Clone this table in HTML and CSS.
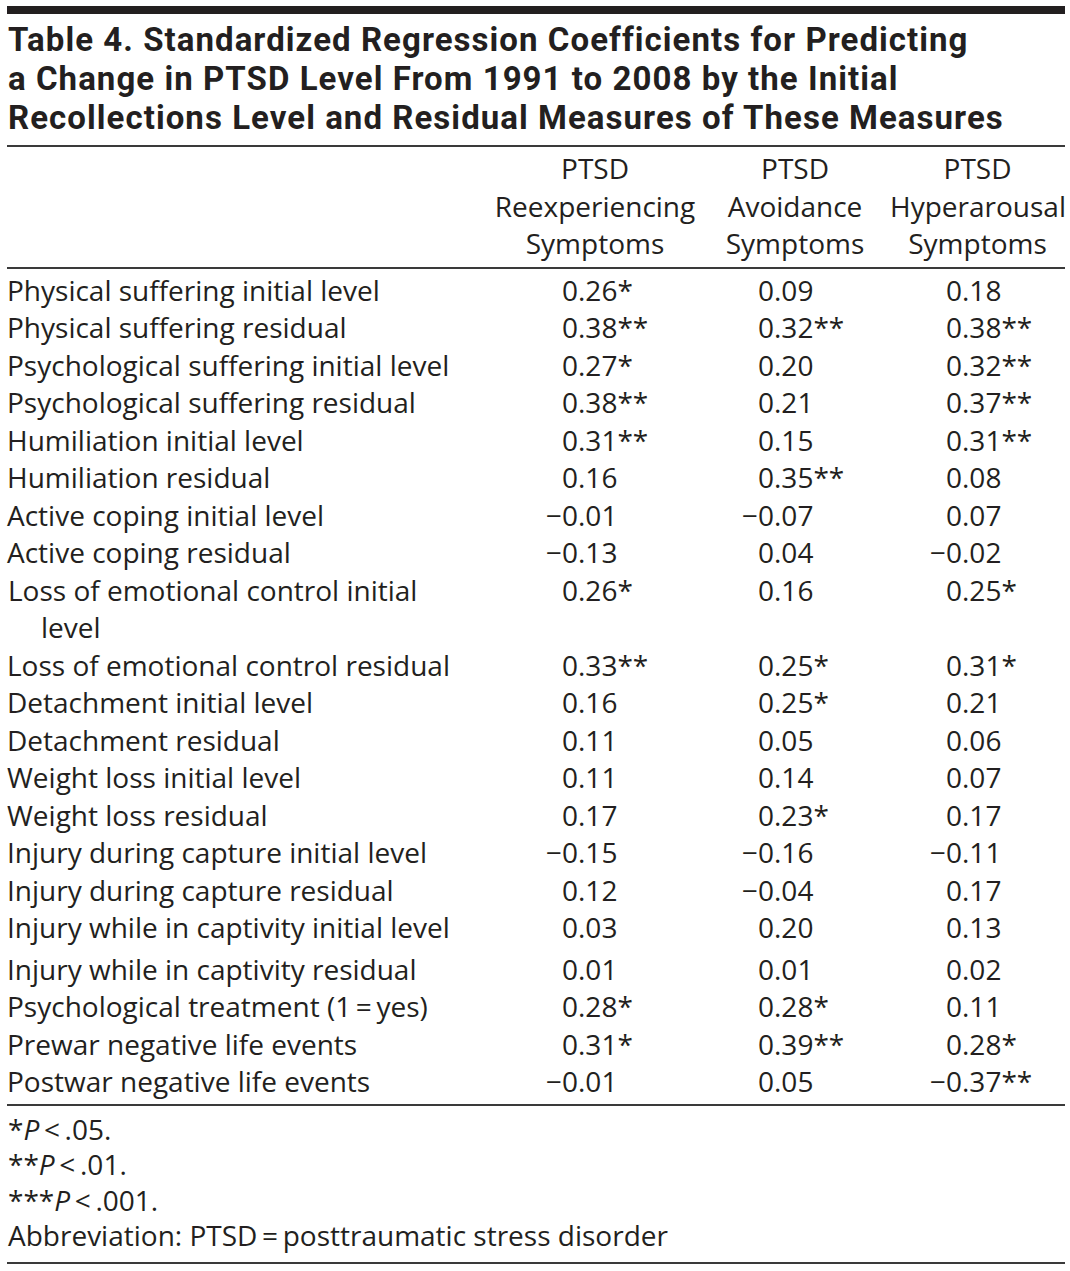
FILE: index.html
```html
<!DOCTYPE html>
<html lang="en">
<head>
<meta charset="utf-8">
<title>Table 4</title>
<link rel="stylesheet" href="styles.css">
</head>
<body>
<div class="page">
  <div class="topbar"></div>
  <h1 class="title">Table 4. Standardized Regression Coefficients for Predicting<br>a Change in PTSD Level From 1991 to 2008 by the Initial<br>Recollections Level and Residual Measures of These Measures</h1>
  <table class="data">
    <colgroup>
      <col class="col-label"><col class="col-a"><col class="col-b"><col class="col-c">
    </colgroup>
    <thead>
      <tr>
        <th></th>
        <th>PTSD<br>Reexperiencing<br>Symptoms</th>
        <th>PTSD<br>Avoidance<br>Symptoms</th>
        <th>PTSD<br>Hyperarousal<br>Symptoms</th>
      </tr>
    </thead>
    <tbody>
      <tr><td class="lbl">Physical suffering initial level</td><td class="v"><span class="s"></span>0.26*</td><td class="v"><span class="s"></span>0.09</td><td class="v"><span class="s"></span>0.18</td></tr>
      <tr><td class="lbl">Physical suffering residual</td><td class="v"><span class="s"></span>0.38**</td><td class="v"><span class="s"></span>0.32**</td><td class="v"><span class="s"></span>0.38**</td></tr>
      <tr><td class="lbl">Psychological suffering initial level</td><td class="v"><span class="s"></span>0.27*</td><td class="v"><span class="s"></span>0.20</td><td class="v"><span class="s"></span>0.32**</td></tr>
      <tr><td class="lbl">Psychological suffering residual</td><td class="v"><span class="s"></span>0.38**</td><td class="v"><span class="s"></span>0.21</td><td class="v"><span class="s"></span>0.37**</td></tr>
      <tr><td class="lbl">Humiliation initial level</td><td class="v"><span class="s"></span>0.31**</td><td class="v"><span class="s"></span>0.15</td><td class="v"><span class="s"></span>0.31**</td></tr>
      <tr><td class="lbl">Humiliation residual</td><td class="v"><span class="s"></span>0.16</td><td class="v"><span class="s"></span>0.35**</td><td class="v"><span class="s"></span>0.08</td></tr>
      <tr><td class="lbl">Active coping initial level</td><td class="v"><span class="s">&minus;</span>0.01</td><td class="v"><span class="s">&minus;</span>0.07</td><td class="v"><span class="s"></span>0.07</td></tr>
      <tr><td class="lbl">Active coping residual</td><td class="v"><span class="s">&minus;</span>0.13</td><td class="v"><span class="s"></span>0.04</td><td class="v"><span class="s">&minus;</span>0.02</td></tr>
      <tr><td class="lbl hang">Loss of emotional control initial<br>level</td><td class="v"><span class="s"></span>0.26*</td><td class="v"><span class="s"></span>0.16</td><td class="v"><span class="s"></span>0.25*</td></tr>
      <tr><td class="lbl">Loss of emotional control residual</td><td class="v"><span class="s"></span>0.33**</td><td class="v"><span class="s"></span>0.25*</td><td class="v"><span class="s"></span>0.31*</td></tr>
      <tr><td class="lbl">Detachment initial level</td><td class="v"><span class="s"></span>0.16</td><td class="v"><span class="s"></span>0.25*</td><td class="v"><span class="s"></span>0.21</td></tr>
      <tr><td class="lbl">Detachment residual</td><td class="v"><span class="s"></span>0.11</td><td class="v"><span class="s"></span>0.05</td><td class="v"><span class="s"></span>0.06</td></tr>
      <tr><td class="lbl">Weight loss initial level</td><td class="v"><span class="s"></span>0.11</td><td class="v"><span class="s"></span>0.14</td><td class="v"><span class="s"></span>0.07</td></tr>
      <tr><td class="lbl">Weight loss residual</td><td class="v"><span class="s"></span>0.17</td><td class="v"><span class="s"></span>0.23*</td><td class="v"><span class="s"></span>0.17</td></tr>
      <tr><td class="lbl">Injury during capture initial level</td><td class="v"><span class="s">&minus;</span>0.15</td><td class="v"><span class="s">&minus;</span>0.16</td><td class="v"><span class="s">&minus;</span>0.11</td></tr>
      <tr><td class="lbl">Injury during capture residual</td><td class="v"><span class="s"></span>0.12</td><td class="v"><span class="s">&minus;</span>0.04</td><td class="v"><span class="s"></span>0.17</td></tr>
      <tr><td class="lbl">Injury while in captivity initial level</td><td class="v"><span class="s"></span>0.03</td><td class="v"><span class="s"></span>0.20</td><td class="v"><span class="s"></span>0.13</td></tr>
      <tr class="gap"><td class="lbl">Injury while in captivity residual</td><td class="v"><span class="s"></span>0.01</td><td class="v"><span class="s"></span>0.01</td><td class="v"><span class="s"></span>0.02</td></tr>
      <tr><td class="lbl">Psychological treatment (1&thinsp;=&thinsp;yes)</td><td class="v"><span class="s"></span>0.28*</td><td class="v"><span class="s"></span>0.28*</td><td class="v"><span class="s"></span>0.11</td></tr>
      <tr><td class="lbl">Prewar negative life events</td><td class="v"><span class="s"></span>0.31*</td><td class="v"><span class="s"></span>0.39**</td><td class="v"><span class="s"></span>0.28*</td></tr>
      <tr><td class="lbl">Postwar negative life events</td><td class="v"><span class="s">&minus;</span>0.01</td><td class="v"><span class="s"></span>0.05</td><td class="v"><span class="s">&minus;</span>0.37**</td></tr>
    </tbody>
  </table>
  <div class="notes">
    <p>*<i>P</i>&thinsp;&lt;&thinsp;.05.</p>
    <p>**<i>P</i>&thinsp;&lt;&thinsp;.01.</p>
    <p>***<i>P</i>&thinsp;&lt;&thinsp;.001.</p>
    <p>Abbreviation: PTSD&thinsp;=&thinsp;posttraumatic stress disorder</p>
  </div>
</div>
</body>
</html>
```

FILE: styles.css
```css
html, body {
  margin: 0;
  padding: 0;
  background: #ffffff;
}

body {
  font-family: "Open Sans", "Noto Sans", "Liberation Sans", sans-serif;
  font-stretch: 100%;
  color: #231f20;
}

.page {
  width: 1058px;
  margin-left: 7px;
  padding-top: 6px;
}

.topbar {
  height: 8px;
  background: #231f20;
}

.title {
  margin: 0;
  padding: 6px 0 8px 1px;
  font-family: Roboto, "Open Sans", sans-serif;
  font-size: 33px;
  line-height: 39px;
  font-weight: 700;
  letter-spacing: 1.05px;
  border-bottom: 2px solid #3a3a3a;
}

.data {
  width: 1058px;
  border-collapse: collapse;
  table-layout: fixed;
  font-size: 28px;
  line-height: 37.5px;
}

.col-label { width: 483px; }
.col-a { width: 210px; }
.col-b { width: 190px; }
.col-c { width: 175px; }

.data th {
  font-weight: 400;
  text-align: center;
  padding: 3px 0 4px;
  vertical-align: top;
  border-bottom: 2px solid #3a3a3a;
}

.data tbody tr:first-child td {
  padding-top: 3px;
}

.data tbody tr:last-child td {
  padding-bottom: 3px;
  border-bottom: 2px solid #3a3a3a;
}

.data td {
  padding: 0;
  vertical-align: top;
  white-space: nowrap;
}

.lbl {
  padding-left: 1px;
}

.hang {
  padding-left: 34px !important;
  text-indent: -33px;
}

.v {
  text-align: left;
}

.data td.v:nth-child(2) { padding-left: 54px; }
.data td.v:nth-child(3) { padding-left: 40px; }
.data td.v:nth-child(4) { padding-left: 38px; }

.s {
  display: inline-block;
  width: 18px;
  text-align: right;
}

.gap td {
  padding-top: 4px;
}

.notes {
  padding: 6px 0 8px 1px;
  font-size: 28px;
  line-height: 35.5px;
  border-bottom: 2px solid #3a3a3a;
}

.notes p {
  margin: 0;
}
```
